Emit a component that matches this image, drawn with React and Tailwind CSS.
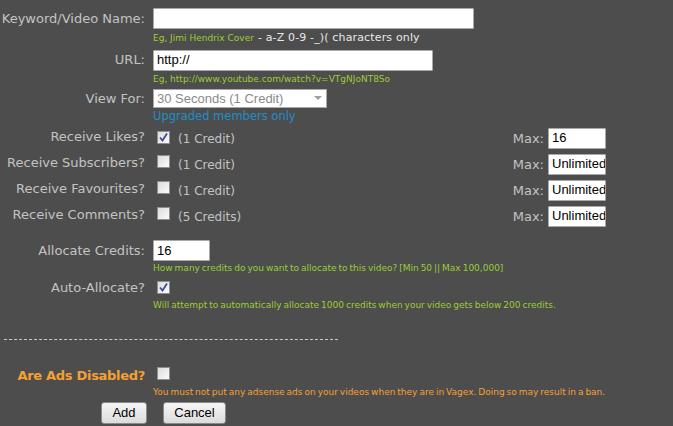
import React from 'react';

const Check = ({ checked }) => (
    <span className="inline-flex w-[13px] h-[13px] border border-[#8e8f8f] bg-gradient-to-br from-[#dcdcdc] to-[#fbfbfb] items-center justify-center shrink-0">
        {checked && (
            <svg width="9" height="9" viewBox="0 0 9 9">
                <path d="M1 4.5 L3.5 7.5 L8 0.5" fill="none" stroke="#3d4d8f" strokeWidth="1.8" />
            </svg>
        )}
    </span>
);

const Label = ({ children, className = '' }) => (
    <div className={`w-[147px] shrink-0 text-right pr-[2px] ${className}`}>{children}</div>
);

const TextBox = ({ value = '', width }) => (
    <div
        className={`h-[21px] bg-white border border-[#a9a9a9] rounded-[1px] px-[3px] flex items-center text-[13px] text-black overflow-hidden whitespace-nowrap ${width}`}
        style={{ fontFamily: '"Liberation Sans", Arial, sans-serif' }}
    >
        {value}
    </div>
);

const Hint = ({ children, className = 'text-[#9acd32]' }) => (
    <div
        className={`text-[9px] leading-[12px] [word-spacing:-0.9px] ${className}`}
        style={{ fontFamily: '"DejaVu Sans", Tahoma, sans-serif' }}
    >
        {children}
    </div>
);

const options = [
    { label: 'Receive Likes?', cost: '(1 Credit)', max: '16', checked: true },
    { label: 'Receive Subscribers?', cost: '(1 Credit)', max: 'Unlimited' },
    { label: 'Receive Favourites?', cost: '(1 Credit)', max: 'Unlimited' },
    { label: 'Receive Comments?', cost: '(5 Credits)', max: 'Unlimited' },
];

const App = () => {
    return (
        <div
            className="w-[673px] h-[426px] bg-[#4d4d4d] text-[#c3c3c3] text-[13px] overflow-hidden relative"
            style={{ fontFamily: '"DejaVu Sans", Verdana, sans-serif' }}
        >
            <div className="pt-[8px]">
                {/* keyword */}
                <div className="flex items-center gap-[6px]">
                    <Label>Keyword/Video Name:</Label>
                    <TextBox width="w-[321px]" />
                </div>
                <div className="flex gap-[6px]">
                    <Label />
                    <div className="flex items-baseline mt-[1px]">
                        <span className="text-[9px] text-[#9acd32]">Eg, Jimi Hendrix Cover</span>
                        <span className="text-[11px] text-[#e8e8e8] ml-[4px] tracking-[0.15px]">- a-Z 0-9 -_)( characters only</span>
                    </div>
                </div>

                {/* url */}
                <div className="flex items-center gap-[6px] mt-[3px]">
                    <Label>URL:</Label>
                    <TextBox value="http://" width="w-[280px]" />
                </div>
                <div className="flex gap-[6px]">
                    <Label />
                    <Hint className="text-[#9acd32] mt-[2px] [word-spacing:0px]">Eg, http://www.youtube.com/watch?v=VTgNJoNT8So</Hint>
                </div>

                {/* view time */}
                <div className="flex items-center gap-[6px] mt-[4px]">
                    <Label>View For:</Label>
                    <div className="w-[174px] h-[19px] bg-white border border-[#a9a9a9] flex items-center justify-between pl-[3px] pr-[4px]">
                        <span className="text-[13px] text-[#8a8a8a]" style={{ fontFamily: '"Liberation Sans", Arial, sans-serif' }}>
                            30 Seconds (1 Credit)
                        </span>
                        <svg width="8" height="5" viewBox="0 0 8 5">
                            <path d="M0 0 H8 L4 4 Z" fill="#a0a0a0" />
                        </svg>
                    </div>
                </div>
                <div className="flex gap-[6px]">
                    <Label />
                    <div className="text-[11.5px] leading-[17px] text-[#1e8ec8]">Upgraded members only</div>
                </div>

                {/* receive options */}
                <div className="mt-[3px] flex flex-col gap-[6px]">
                    {options.map((o) => (
                        <div key={o.label} className="flex items-center h-[20px]">
                            <Label className="-mt-[2px]">{o.label}</Label>
                            <div className="ml-[10px]">
                                <Check checked={o.checked} />
                            </div>
                            <span className="ml-[8px] mt-[1px] text-[12px]">{o.cost}</span>
                            <span className="ml-auto mr-[4px] mt-[1px]">Max:</span>
                            <TextBox value={o.max} width="w-[58px] mr-[67px]" />
                        </div>
                    ))}
                </div>

                {/* allocate */}
                <div className="flex items-center gap-[6px] mt-[14px]">
                    <Label>Allocate Credits:</Label>
                    <TextBox value="16" width="w-[57px]" />
                </div>
                <div className="flex gap-[6px]">
                    <Label />
                    <Hint className="text-[#9acd32] mt-[1px]">How many credits do you want to allocate to this video? [Min 50 || Max 100,000]</Hint>
                </div>
                <div className="flex items-center mt-[4px]">
                    <Label>Auto-Allocate?</Label>
                    <div className="ml-[10px]">
                        <Check checked />
                    </div>
                </div>
                <div className="flex gap-[6px]">
                    <Label />
                    <Hint className="text-[#9acd32] mt-[1px]">Will attempt to automatically allocate 1000 credits when your video gets below 200 credits.</Hint>
                </div>

                <div className="ml-[4px] w-[334px] border-t border-dashed border-[#c8c8c8] mt-[28px]" />

                {/* ads */}
                <div className="flex items-center mt-[26px]">
                    <Label className="font-bold text-[#f5a033] tracking-[-0.3px]">Are Ads Disabled?</Label>
                    <div className="ml-[10px]">
                        <Check />
                    </div>
                </div>
                <div className="flex gap-[6px]">
                    <Label />
                    <Hint className="text-[#f5a033] mt-[1px]">You must not put any adsense ads on your videos when they are in Vagex. Doing so may result in a ban.</Hint>
                </div>

                <div className="flex gap-[16px] pl-[101px] mt-[4px]" style={{ fontFamily: '"Liberation Sans", Arial, sans-serif' }}>
                    <button className="w-[46px] h-[22px] text-[13px] text-black border border-[#8a8a8a] rounded-[3px] bg-gradient-to-b from-[#f6f6f6] to-[#dcdcdc]">
                        Add
                    </button>
                    <button className="w-[63px] h-[22px] text-[13px] text-black border border-[#8a8a8a] rounded-[3px] bg-gradient-to-b from-[#f6f6f6] to-[#dcdcdc]">
                        Cancel
                    </button>
                </div>
            </div>
        </div>
    );
};

export default App;
